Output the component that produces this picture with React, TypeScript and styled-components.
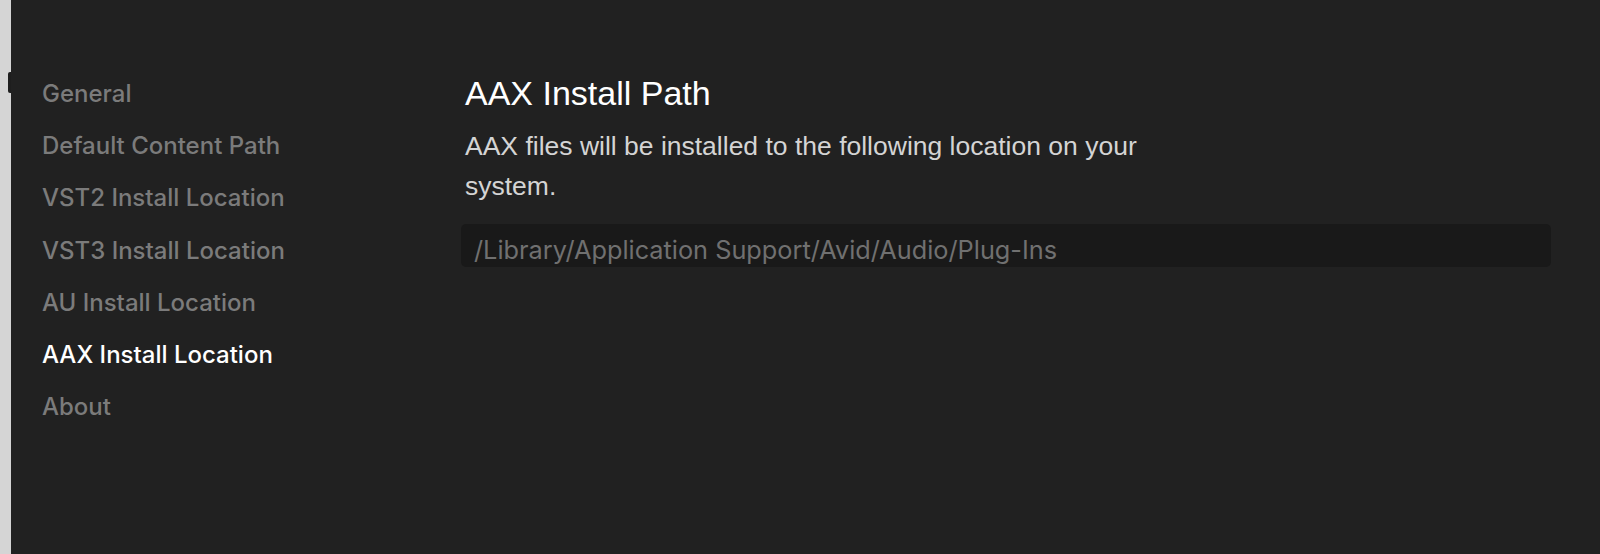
import styled, { createGlobalStyle } from "styled-components";

const GlobalStyle = createGlobalStyle`
  html, body {
    margin: 0;
    padding: 0;
    height: 100%;
    background: #d5d5d5;
  }
  #root {
    height: 100%;
  }
`;

const Window = styled.div`
  display: flex;
  height: 554px;
  width: 1600px;
  overflow: hidden;
`;

const Edge = styled.div`
  position: relative;
  width: 11px;
  flex-shrink: 0;
  background: #d5d5d5;
`;

const EdgeTab = styled.span`
  position: absolute;
  left: 8px;
  top: 72px;
  width: 3px;
  height: 21px;
  background: #1e1e1e;
  border-radius: 2px 0 0 2px;
`;

const Panel = styled.div`
  flex: 1;
  display: flex;
  background: #212121;
`;

const Sidebar = styled.nav`
  width: 450px;
  flex-shrink: 0;
  padding: 68px 0 0 31px;
  box-sizing: border-box;
  display: flex;
  flex-direction: column;
`;

const NavItem = styled.a<{ $active?: boolean }>`
  font-family: "Inter", "Noto Sans", sans-serif;
  font-size: 24px;
  font-weight: 500;
  line-height: 52.2px;
  color: ${(p) => (p.$active ? "#ffffff" : "#7b7b7b")};
  text-decoration: none;
  cursor: pointer;
`;

const Content = styled.section`
  flex: 1;
  padding: 75px 49px 0 0;
  display: flex;
  flex-direction: column;
`;

const Title = styled.h1`
  margin: 0 0 0 4px;
  font-family: "Liberation Sans", Arial, sans-serif;
  font-weight: 400;
  font-size: 34px;
  line-height: 36px;
  color: #ffffff;
`;

const Description = styled.p`
  margin: 15px 0 0 4px;
  max-width: 720px;
  font-family: "Liberation Sans", Arial, sans-serif;
  font-size: 26.5px;
  line-height: 40px;
  color: #d4d4d4;
`;

const PathField = styled.div`
  margin-top: 18px;
  height: 43px;
  box-sizing: border-box;
  padding: 8px 0 0 13px;
  border-radius: 5px;
  background: #191919;
  display: flex;
  align-items: center;
  font-family: "Inter", "Noto Sans", sans-serif;
  font-size: 25.3px;
  color: #707070;
`;

const items = [
  "General",
  "Default Content Path",
  "VST2 Install Location",
  "VST3 Install Location",
  "AU Install Location",
  "AAX Install Location",
  "About",
];

export default function App() {
  return (
    <>
      <GlobalStyle />
      <Window>
        <Edge>
          <EdgeTab />
        </Edge>
        <Panel>
          <Sidebar>
            {items.map((item) => (
              <NavItem key={item} $active={item === "AAX Install Location"}>
                {item}
              </NavItem>
            ))}
          </Sidebar>
          <Content>
            <Title>AAX Install Path</Title>
            <Description>
              AAX files will be installed to the following location on your
              system.
            </Description>
            <PathField>/Library/Application Support/Avid/Audio/Plug-Ins</PathField>
          </Content>
        </Panel>
      </Window>
    </>
  );
}
